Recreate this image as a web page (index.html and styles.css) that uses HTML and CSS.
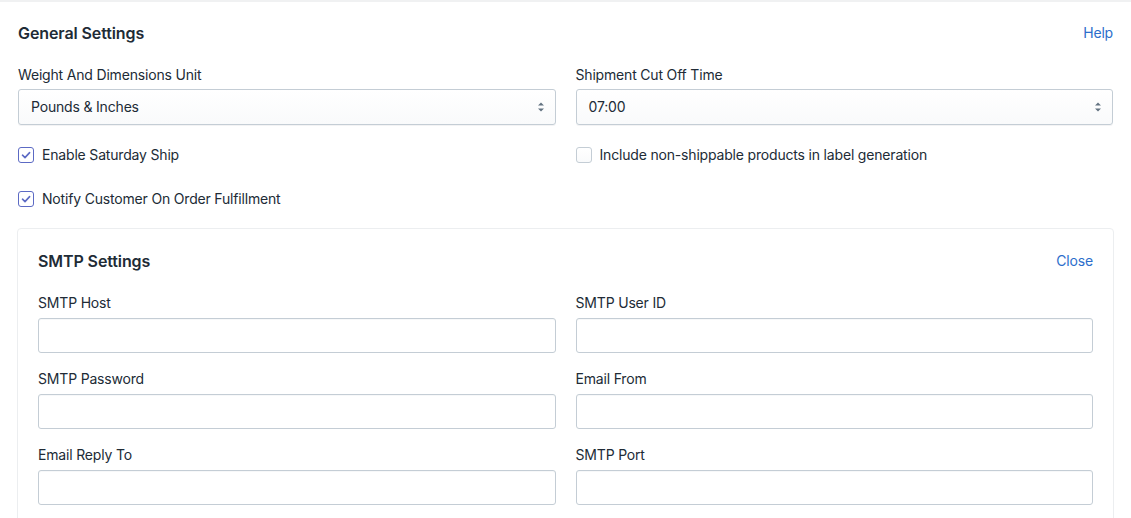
FILE: index.html
```html
<!DOCTYPE html>
<html>
<head>
<meta charset="utf-8">
<link rel="stylesheet" href="styles.css">
</head>
<body>
<div class="page">
  <div class="head main-head">
    <h2 class="title">General Settings</h2>
    <a class="link">Help</a>
  </div>
  <div class="grid">
    <div class="field">
      <label class="label">Weight And Dimensions Unit</label>
      <div class="select"><span>Pounds &amp; Inches</span>
        <svg class="arrows" width="8" height="12" viewBox="0 0 8 12"><path d="M4 1.5 L7 4.5 H1 Z M4 10.5 L7 7.5 H1 Z" fill="#637381"/></svg>
      </div>
    </div>
    <div class="field">
      <label class="label">Shipment Cut Off Time</label>
      <div class="select"><span>07:00</span>
        <svg class="arrows" width="8" height="12" viewBox="0 0 8 12"><path d="M4 1.5 L7 4.5 H1 Z M4 10.5 L7 7.5 H1 Z" fill="#637381"/></svg>
      </div>
    </div>
  </div>
  <div class="checks">
    <div class="check"><span class="box on"><svg width="12" height="12" viewBox="0 0 12 12"><path d="M2.5 6.2 L5 8.6 L9.6 3.6" fill="none" stroke="#5c6ac4" stroke-width="1.6" stroke-linecap="round" stroke-linejoin="round"/></svg></span>Enable Saturday Ship</div>
    <div class="check"><span class="box"></span>Include non-shippable products in label generation</div>
    <div class="check"><span class="box on"><svg width="12" height="12" viewBox="0 0 12 12"><path d="M2.5 6.2 L5 8.6 L9.6 3.6" fill="none" stroke="#5c6ac4" stroke-width="1.6" stroke-linecap="round" stroke-linejoin="round"/></svg></span>Notify Customer On Order Fulfillment</div>
  </div>
  <div class="card">
    <div class="head card-head">
      <h2 class="title">SMTP Settings</h2>
      <a class="link">Close</a>
    </div>
    <div class="grid form">
      <div class="field"><label class="label">SMTP Host</label><div class="input"></div></div>
      <div class="field"><label class="label">SMTP User ID</label><div class="input"></div></div>
      <div class="field"><label class="label">SMTP Password</label><div class="input"></div></div>
      <div class="field"><label class="label">Email From</label><div class="input"></div></div>
      <div class="field"><label class="label">Email Reply To</label><div class="input"></div></div>
      <div class="field"><label class="label">SMTP Port</label><div class="input"></div></div>
    </div>
  </div>
</div>
</body>
</html>
```
FILE: styles.css
```css
html, body { margin: 0; padding: 0; background: #fff; }
body {
  font-family: Inter, "Noto Sans", sans-serif;
  color: #212b36;
  font-size: 14px;
  line-height: 20px;
  letter-spacing: -0.18px;
  overflow: hidden;
}
.page {
  border-top: 2px solid #f0f1f2;
  padding: 0 18px;
}
.head {
  display: flex;
  justify-content: space-between;
  align-items: center;
  height: 63px;
}
.main-head {
  box-sizing: border-box;
  padding-bottom: 2px;
}
.title {
  margin: 0;
  font-size: 16px;
  font-weight: 600;
  line-height: 24px;
  letter-spacing: -0.1px;
  color: #212b36;
}
.link {
  color: #2c6ecb;
  font-size: 14px;
}
.grid {
  display: grid;
  grid-template-columns: 1fr 1fr;
  column-gap: 20px;
}
.field { display: flex; flex-direction: column; }
.label { display: block; margin-bottom: 4px; }
.select {
  height: 36px;
  box-sizing: border-box;
  border: 1px solid #c4cdd5;
  border-radius: 3px;
  background: linear-gradient(#ffffff, #f9fafb);
  box-shadow: 0 1px 0 rgba(22,29,37,0.05);
  display: flex;
  align-items: center;
  justify-content: space-between;
  padding: 0 10px 0 12px;
}
.arrows { display: block; }
.checks {
  display: grid;
  grid-template-columns: 1fr 1fr;
  column-gap: 20px;
  margin-top: 8px;
}
.check {
  display: flex;
  align-items: center;
  height: 44px;
}
.box {
  width: 16px;
  height: 16px;
  box-sizing: border-box;
  border: 1px solid #c4cdd5;
  border-radius: 3px;
  background: linear-gradient(#ffffff, #f9fafb);
  margin-right: 8px;
  display: flex;
  align-items: center;
  justify-content: center;
}
.box.on { border-color: #5c6ac4; background: #fff; }
.card {
  margin: 7px -1px 0;
  border: 1px solid #eceef0;
  border-radius: 4px;
  padding: 0 20px 20px;
}
.card-head { height: 64px; }
.form { row-gap: 16px; margin-top: 0; }
.form .label { margin-bottom: 5px; }
.input {
  height: 35px;
  box-sizing: border-box;
  border: 1px solid #c4cdd5;
  border-radius: 3px;
  background: #fff;
  box-shadow: inset 0 1px 0 rgba(99,115,129,0.05);
}
```
